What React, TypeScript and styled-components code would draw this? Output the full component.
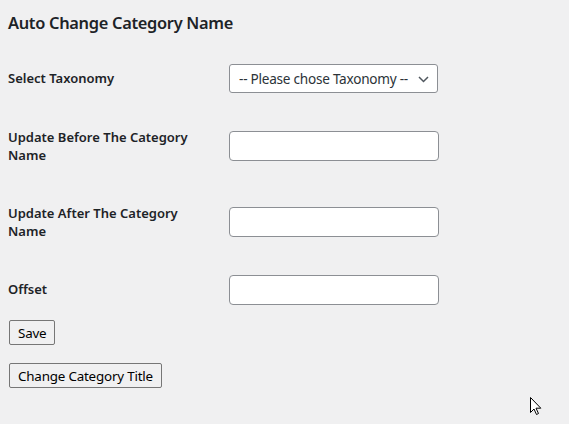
import styled, { createGlobalStyle } from "styled-components";

const GlobalStyle = createGlobalStyle`
  html, body {
    margin: 0;
    background: #f0f0f1;
  }
  body {
    font-family: "Noto Sans", "Open Sans", sans-serif;
    color: #1d2327;
    font-size: 13px;
  }
`;

const Page = styled.div`
  position: relative;
  min-height: 424px;
  padding: 11px 8px 0;
  box-sizing: border-box;
`;

const Title = styled.h2`
  margin: 0 0 15px;
  font-size: 16.4px;
  line-height: 23px;
  font-weight: 600;
  letter-spacing: -0.3px;
  color: #1d2327;
`;

const FormTable = styled.div`
  display: flex;
  flex-direction: column;
`;

const Row = styled.div`
  display: flex;
  align-items: center;
`;

const Label = styled.label`
  width: 211px;
  align-self: flex-start;
  box-sizing: border-box;
  padding: 20px 10px 20px 0;
  font-size: 13px;
  line-height: 18px;
  font-weight: 600;
`;

const Field = styled.div`
  position: relative;
  padding: 15px 10px;
`;

const Select = styled.select`
  appearance: none;
  width: 209px;
  height: 29px;
  padding: 0 24px 0 9px;
  border: 1px solid #8c8f94;
  border-radius: 3px;
  background: #fff;
  color: #2c3338;
  font-family: inherit;
  font-size: 13.6px;
  letter-spacing: -0.25px;
`;

const Chevron = styled.svg`
  position: absolute;
  right: 19px;
  top: 50%;
  margin-top: -3px;
  pointer-events: none;
`;

const TextInput = styled.input`
  width: 210px;
  height: 30px;
  box-sizing: border-box;
  border: 1px solid #8c8f94;
  border-radius: 4px;
  background: #fff;
  font-family: inherit;
  font-size: 14px;
`;

const Actions = styled.div<{ $top: number }>`
  margin-top: ${(p) => p.$top}px;
  padding-left: 1px;
`;

const Button = styled.button`
  height: 25px;
  padding: 0 8px;
  border: 1px solid #767676;
  border-radius: 2px;
  background: transparent;
  color: #000;
  font-family: inherit;
  font-size: 13.4px;
  letter-spacing: -0.2px;
  line-height: 20px;
`;

const Cursor = styled.svg`
  position: absolute;
  left: 530px;
  top: 397px;
`;

export default function App() {
  const textFields: [string, number][] = [
    ["Update Before The Category Name", 1],
    ["Update After The Category Name", 2],
    ["Offset", 3],
  ];

  return (
    <>
      <GlobalStyle />
      <Page>
        <Title>Auto Change Category Name</Title>
        <FormTable>
          <Row>
            <Label>Select Taxonomy</Label>
            <Field>
              <Select defaultValue="">
                <option value="">-- Please chose Taxonomy --</option>
              </Select>
              <Chevron width="11" height="7" viewBox="0 0 11 7">
                <path d="M1 1 L5.5 5.5 L10 1" fill="none" stroke="#50575e" strokeWidth="1.5" />
              </Chevron>
            </Field>
          </Row>
          {textFields.map(([label, id]) => (
            <Row key={id}>
              <Label>{label}</Label>
              <Field>
                <TextInput type="text" />
              </Field>
            </Row>
          ))}
        </FormTable>
        <Actions $top={0}>
          <Button>Save</Button>
        </Actions>
        <Actions $top={18}>
          <Button>Change Category Title</Button>
        </Actions>
        <Cursor width="12" height="19" viewBox="0 0 12 19">
          <path
            d="M0.5 0.5 L0.5 15.5 L4 12 L6.5 17.5 L8.5 16.5 L6 11.2 L10.8 11.2 Z"
            fill="#fff"
            stroke="#000"
            strokeWidth="1"
            strokeLinejoin="round"
          />
        </Cursor>
      </Page>
    </>
  );
}
